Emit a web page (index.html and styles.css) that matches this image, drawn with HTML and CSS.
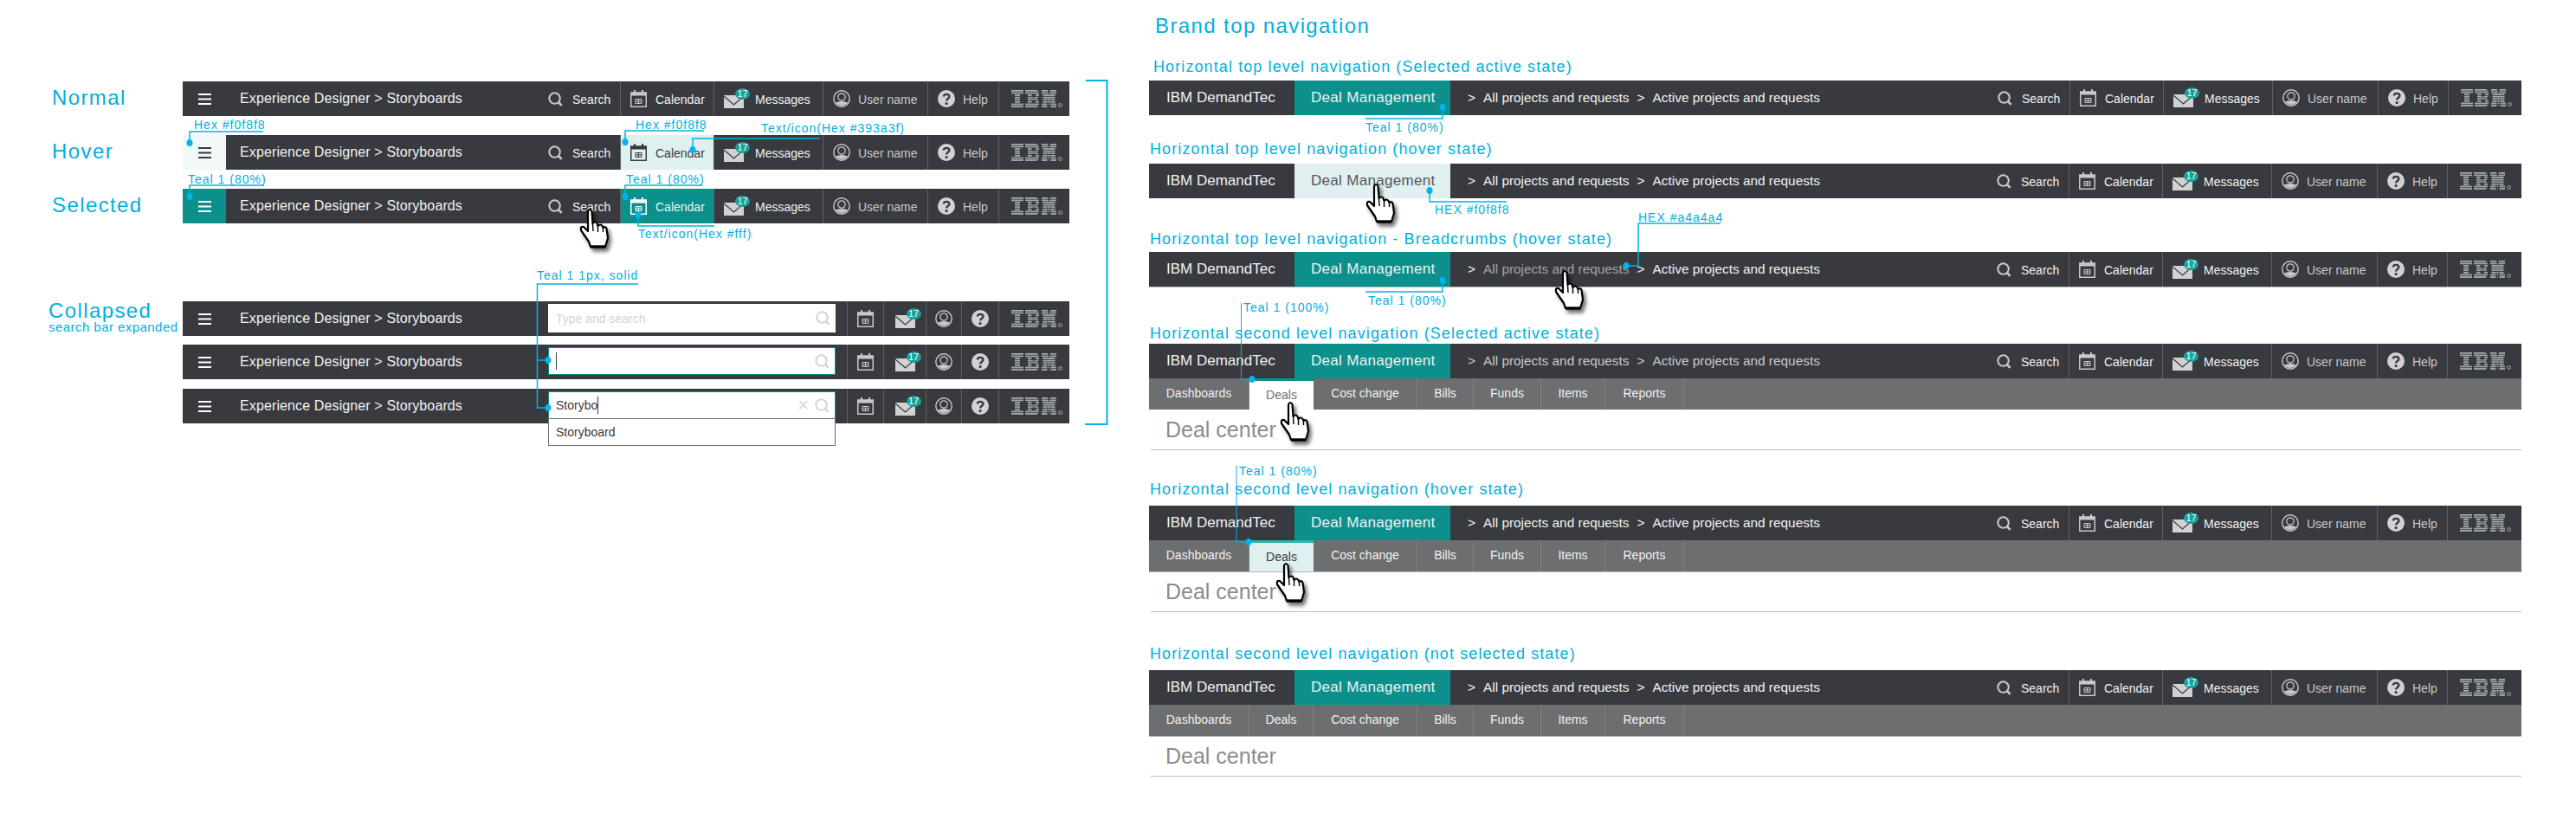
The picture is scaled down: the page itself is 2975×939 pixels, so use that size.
FILE: index.html
```html
<!DOCTYPE html>
<html lang="en">
<head>
  <meta charset="UTF-8">
  <title>Navigation states</title>
  <link rel="stylesheet" href="styles.css">
</head>
<body>

  <!-- Icons used by every bar -->
  <svg class="icon-defs" width="0" height="0" aria-hidden="true">
    <defs>
      <pattern id="ibm-stripes" patternUnits="userSpaceOnUse" width="60" height="2.6">
        <rect width="60" height="1.6" fill="#a9b1b8"/>
      </pattern>
    </defs>
    <symbol id="i-search" viewBox="0 0 18 18">
      <circle cx="8" cy="8" r="6.6" fill="none" stroke="currentColor" stroke-width="2.2"/>
      <path d="M12.5 12.5 L16.5 16.8" fill="none" stroke="currentColor" stroke-width="2.8"/>
    </symbol>
    <symbol id="i-cal" viewBox="0 0 19 20">
      <rect x="0.75" y="3" width="17.5" height="16.25" fill="none" stroke="currentColor" stroke-width="1.5"/>
      <rect x="0.75" y="3" width="17.5" height="3.5" fill="currentColor"/>
      <rect x="4" y="0" width="2" height="4" fill="currentColor"/>
      <rect x="13" y="0" width="2" height="4" fill="currentColor"/>
      <path d="M6 10.5h7v5H6z M9.5 10.5v5 M6 13h7" fill="none" stroke="currentColor" stroke-width="1"/>
    </symbol>
    <symbol id="i-mail" viewBox="0 0 23 15">
      <rect width="23" height="15" fill="currentColor"/>
      <path d="M0 1 L11.5 11 L23 1" fill="none" stroke="#393a3f" stroke-width="1.3"/>
    </symbol>
    <symbol id="i-user" viewBox="0 0 20 20">
      <circle cx="10" cy="10" r="9.2" fill="none" stroke="currentColor" stroke-width="1.4"/>
      <circle cx="10" cy="8" r="4.2" fill="none" stroke="currentColor" stroke-width="1.2"/>
      <path d="M3 14.5 Q6 13 10 13 Q14 13 17 14.5 A8.8 8.8 0 0 1 3 14.5 Z" fill="currentColor"/>
    </symbol>
    <symbol id="i-help" viewBox="0 0 20 20">
      <circle cx="10" cy="10" r="10" fill="currentColor"/>
      <path d="M6.8 7.6 C6.8 3.9 13.4 3.9 13.4 7.6 C13.4 9.9 10.1 9.7 10.1 12.6" fill="none" stroke="#393a3f" stroke-width="2.4"/>
      <circle cx="10.1" cy="15.6" r="1.6" fill="#393a3f"/>
    </symbol>
    <symbol id="i-ibm" viewBox="0 0 60 20">
      <path fill="url(#ibm-stripes)" fill-rule="evenodd" d="M0 0h14v5h-4v10h4v5H0v-5h4V5H0z M16 0h12c3 0 4 2.5 4 5 0 2-1 4-2 5 1 1 2 3 2 5 0 2.5-1 5-4 5H16v-5h3V5h-3z M23.5 5v3.5h4c1 0 1-3.5 0-3.5z M23.5 11.5v3.5h4c1 0 1-3.5 0-3.5z M35 0h7l1.5 6 1.5-6h7v5h-1.5v10H52v5h-6.5V9l-2 11-2-11v11H35v-5h1.5V5H35z"/>
      <circle cx="56.5" cy="17.5" r="1.9" fill="none" stroke="#a9b1b8" stroke-width="1"/>
    </symbol>
    <symbol id="i-hand" viewBox="0 0 36 48">
      <path d="M10 4 Q12 0 14.5 4 L15.5 18 Q18.5 15 20.5 18 L21.5 21 Q24.5 18 26.5 21 L27.5 23 Q30.5 21 31.5 24 L33 35 L30 45 L13 45 L11 39 L2 26 Q1 21 5 22 L10 27 Z" fill="#fff" stroke="#000" stroke-width="2.2" stroke-linejoin="round"/>
      <path d="M15.5 18 L16 27 M21.5 21 L21.5 28 M27.5 23 L27.5 28" fill="none" stroke="#000" stroke-width="1.4"/>
      <path d="M13 45 L30 45" stroke="#000" stroke-width="3.4"/>
    </symbol>
    <symbol id="i-burger" viewBox="0 0 15 13">
      <rect width="15" height="2" fill="currentColor"/>
      <rect y="5.5" width="15" height="2" fill="currentColor"/>
      <rect y="11" width="15" height="2" fill="currentColor"/>
    </symbol>
  </svg>

  <div class="sheet">

    <!-- Left column: application bar states -->
    <section class="states">
      <div class="state-group">
        <div class="state-row">
          <div class="state-label">Normal</div>
          <div class="app-bar">
            <div class="menu-cell"><svg class="icon-burger"><use href="#i-burger"/></svg></div>
            <div class="crumb-title">Experience Designer &gt; Storyboards</div>
            <div class="utility">
              <div class="util util-search"><svg class="icon-search"><use href="#i-search"/></svg><span>Search</span></div>
              <div class="util util-cal"><svg class="icon-cal"><use href="#i-cal"/></svg><span>Calendar</span></div>
              <div class="util util-mail"><span class="mail"><svg class="icon-mail"><use href="#i-mail"/></svg><b class="badge">17</b></span><span>Messages</span></div>
              <div class="util util-user"><svg class="icon-user"><use href="#i-user"/></svg><span>User name</span></div>
              <div class="util util-help"><svg class="icon-help"><use href="#i-help"/></svg><span>Help</span></div>
              <div class="util util-logo"><svg class="icon-ibm"><use href="#i-ibm"/></svg></div>
            </div>
          </div>
        </div>

        <div class="state-row">
          <div class="state-label">Hover</div>
          <div class="app-bar">
            <div class="menu-cell menu-hover"><svg class="icon-burger"><use href="#i-burger"/></svg></div>
            <div class="crumb-title">Experience Designer &gt; Storyboards</div>
            <div class="utility">
              <div class="util util-search"><svg class="icon-search"><use href="#i-search"/></svg><span>Search</span></div>
              <div class="util util-cal util-hover"><svg class="icon-cal"><use href="#i-cal"/></svg><span>Calendar</span></div>
              <div class="util util-mail"><span class="mail"><svg class="icon-mail"><use href="#i-mail"/></svg><b class="badge">17</b></span><span>Messages</span></div>
              <div class="util util-user"><svg class="icon-user"><use href="#i-user"/></svg><span>User name</span></div>
              <div class="util util-help"><svg class="icon-help"><use href="#i-help"/></svg><span>Help</span></div>
              <div class="util util-logo"><svg class="icon-ibm"><use href="#i-ibm"/></svg></div>
            </div>
          </div>
        </div>

        <div class="state-row">
          <div class="state-label">Selected</div>
          <div class="app-bar">
            <div class="menu-cell menu-selected"><svg class="icon-burger"><use href="#i-burger"/></svg></div>
            <div class="crumb-title">Experience Designer &gt; Storyboards</div>
            <div class="utility">
              <div class="util util-search"><svg class="icon-search"><use href="#i-search"/></svg><span>Search</span></div>
              <div class="util util-cal util-selected"><svg class="icon-cal"><use href="#i-cal"/></svg><span>Calendar</span></div>
              <div class="util util-mail"><span class="mail"><svg class="icon-mail"><use href="#i-mail"/></svg><b class="badge">17</b></span><span>Messages</span></div>
              <div class="util util-user"><svg class="icon-user"><use href="#i-user"/></svg><span>User name</span></div>
              <div class="util util-help"><svg class="icon-help"><use href="#i-help"/></svg><span>Help</span></div>
              <div class="util util-logo"><svg class="icon-ibm"><use href="#i-ibm"/></svg></div>
            </div>
          </div>
        </div>
      </div>

      <div class="state-group state-group-collapsed">
        <div class="state-row">
          <div class="state-label state-label-collapsed">Collapsed<small>search bar expanded</small></div>
          <div class="app-bar">
            <div class="menu-cell"><svg class="icon-burger"><use href="#i-burger"/></svg></div>
            <div class="crumb-title">Experience Designer &gt; Storyboards</div>
            <div class="utility">
              <div class="search-box"><span class="placeholder">Type and search</span><svg class="icon-search box-search"><use href="#i-search"/></svg></div>
              <div class="mini mini-cal"><svg class="icon-cal"><use href="#i-cal"/></svg></div>
              <div class="mini mini-mail"><span class="mail"><svg class="icon-mail"><use href="#i-mail"/></svg><b class="badge">17</b></span></div>
              <div class="mini mini-user"><svg class="icon-user"><use href="#i-user"/></svg></div>
              <div class="mini mini-help"><svg class="icon-help"><use href="#i-help"/></svg></div>
              <div class="util util-logo"><svg class="icon-ibm"><use href="#i-ibm"/></svg></div>
            </div>
          </div>
        </div>

        <div class="state-row">
          <div class="state-label"></div>
          <div class="app-bar">
            <div class="menu-cell"><svg class="icon-burger"><use href="#i-burger"/></svg></div>
            <div class="crumb-title">Experience Designer &gt; Storyboards</div>
            <div class="utility">
              <div class="search-box search-focus"><i class="caret"></i><svg class="icon-search box-search"><use href="#i-search"/></svg></div>
              <div class="mini mini-cal"><svg class="icon-cal"><use href="#i-cal"/></svg></div>
              <div class="mini mini-mail"><span class="mail"><svg class="icon-mail"><use href="#i-mail"/></svg><b class="badge">17</b></span></div>
              <div class="mini mini-user"><svg class="icon-user"><use href="#i-user"/></svg></div>
              <div class="mini mini-help"><svg class="icon-help"><use href="#i-help"/></svg></div>
              <div class="util util-logo"><svg class="icon-ibm"><use href="#i-ibm"/></svg></div>
            </div>
          </div>
        </div>

        <div class="state-row state-row-last">
          <div class="state-label"></div>
          <div class="app-bar">
            <div class="menu-cell"><svg class="icon-burger"><use href="#i-burger"/></svg></div>
            <div class="crumb-title">Experience Designer &gt; Storyboards</div>
            <div class="utility">
              <div class="search-box search-focus">
                <span class="typed">Storybo</span><i class="caret"></i>
                <span class="box-clear">&times;</span>
                <svg class="icon-search box-search box-search-typed"><use href="#i-search"/></svg>
                <div class="suggest">Storyboard</div>
              </div>
              <div class="mini mini-cal"><svg class="icon-cal"><use href="#i-cal"/></svg></div>
              <div class="mini mini-mail"><span class="mail"><svg class="icon-mail"><use href="#i-mail"/></svg><b class="badge">17</b></span></div>
              <div class="mini mini-user"><svg class="icon-user"><use href="#i-user"/></svg></div>
              <div class="mini mini-help"><svg class="icon-help"><use href="#i-help"/></svg></div>
              <div class="util util-logo"><svg class="icon-ibm"><use href="#i-ibm"/></svg></div>
            </div>
          </div>
        </div>
      </div>
    </section>

    <!-- Right column: brand navigation -->
    <section class="brand">
      <h1 class="brand-title">Brand top navigation</h1>

      <div class="spec spec-1">
        <h2 class="spec-heading spec-heading-first">Horizontal top level navigation (Selected active state)</h2>
        <div class="brand-bar">
          <div class="product">IBM DemandTec</div>
          <div class="tab tab-selected">Deal Management</div>
          <div class="breadcrumbs"><span class="sep">&gt;</span><span>All projects and requests</span><span class="sep">&gt;</span><span>Active projects and requests</span></div>
          <div class="utility">
            <div class="util util-search"><svg class="icon-search"><use href="#i-search"/></svg><span>Search</span></div>
            <div class="util util-cal"><svg class="icon-cal"><use href="#i-cal"/></svg><span>Calendar</span></div>
            <div class="util util-mail"><span class="mail"><svg class="icon-mail"><use href="#i-mail"/></svg><b class="badge">17</b></span><span>Messages</span></div>
            <div class="util util-user"><svg class="icon-user"><use href="#i-user"/></svg><span>User name</span></div>
            <div class="util util-help"><svg class="icon-help"><use href="#i-help"/></svg><span>Help</span></div>
            <div class="util util-logo"><svg class="icon-ibm"><use href="#i-ibm"/></svg></div>
          </div>
        </div>
      </div>

      <div class="spec spec-2">
        <h2 class="spec-heading">Horizontal top level navigation (hover state)</h2>
        <div class="brand-bar brand-bar-shift">
          <div class="product">IBM DemandTec</div>
          <div class="tab tab-hover">Deal Management</div>
          <div class="breadcrumbs"><span class="sep">&gt;</span><span>All projects and requests</span><span class="sep">&gt;</span><span>Active projects and requests</span></div>
          <div class="utility">
            <div class="util util-search"><svg class="icon-search"><use href="#i-search"/></svg><span>Search</span></div>
            <div class="util util-cal"><svg class="icon-cal"><use href="#i-cal"/></svg><span>Calendar</span></div>
            <div class="util util-mail"><span class="mail"><svg class="icon-mail"><use href="#i-mail"/></svg><b class="badge">17</b></span><span>Messages</span></div>
            <div class="util util-user"><svg class="icon-user"><use href="#i-user"/></svg><span>User name</span></div>
            <div class="util util-help"><svg class="icon-help"><use href="#i-help"/></svg><span>Help</span></div>
            <div class="util util-logo"><svg class="icon-ibm"><use href="#i-ibm"/></svg></div>
          </div>
        </div>
      </div>

      <div class="spec spec-3">
        <h2 class="spec-heading">Horizontal top level navigation - Breadcrumbs (hover state)</h2>
        <div class="brand-bar brand-bar-shift brand-bar-edge">
          <div class="product">IBM DemandTec</div>
          <div class="tab tab-selected">Deal Management</div>
          <div class="breadcrumbs"><span class="sep">&gt;</span><span class="crumb-hover">All projects and requests</span><span class="sep">&gt;</span><span>Active projects and requests</span></div>
          <div class="utility">
            <div class="util util-search"><svg class="icon-search"><use href="#i-search"/></svg><span>Search</span></div>
            <div class="util util-cal"><svg class="icon-cal"><use href="#i-cal"/></svg><span>Calendar</span></div>
            <div class="util util-mail"><span class="mail"><svg class="icon-mail"><use href="#i-mail"/></svg><b class="badge">17</b></span><span>Messages</span></div>
            <div class="util util-user"><svg class="icon-user"><use href="#i-user"/></svg><span>User name</span></div>
            <div class="util util-help"><svg class="icon-help"><use href="#i-help"/></svg><span>Help</span></div>
            <div class="util util-logo"><svg class="icon-ibm"><use href="#i-ibm"/></svg></div>
          </div>
        </div>
      </div>

      <div class="spec spec-4">
        <h2 class="spec-heading">Horizontal second level navigation (Selected active state)</h2>
        <div class="brand-bar brand-bar-shift">
          <div class="product">IBM DemandTec</div>
          <div class="tab tab-selected">Deal Management</div>
          <div class="breadcrumbs breadcrumbs-dim"><span class="sep">&gt;</span><span>All projects and requests</span><span class="sep">&gt;</span><span>Active projects and requests</span></div>
          <div class="utility">
            <div class="util util-search"><svg class="icon-search"><use href="#i-search"/></svg><span>Search</span></div>
            <div class="util util-cal"><svg class="icon-cal"><use href="#i-cal"/></svg><span>Calendar</span></div>
            <div class="util util-mail"><span class="mail"><svg class="icon-mail"><use href="#i-mail"/></svg><b class="badge">17</b></span><span>Messages</span></div>
            <div class="util util-user"><svg class="icon-user"><use href="#i-user"/></svg><span>User name</span></div>
            <div class="util util-help"><svg class="icon-help"><use href="#i-help"/></svg><span>Help</span></div>
            <div class="util util-logo"><svg class="icon-ibm"><use href="#i-ibm"/></svg></div>
          </div>
        </div>
        <div class="sub-nav">
          <div class="sub">Dashboards</div>
          <div class="sub sub-selected">Deals</div>
          <div class="sub">Cost change</div>
          <div class="sub">Bills</div>
          <div class="sub">Funds</div>
          <div class="sub">Items</div>
          <div class="sub">Reports</div>
        </div>
        <div class="page-title">Deal center</div>
      </div>

      <div class="spec spec-5">
        <h2 class="spec-heading">Horizontal second level navigation (hover state)</h2>
        <div class="brand-bar brand-bar-shift">
          <div class="product">IBM DemandTec</div>
          <div class="tab tab-selected">Deal Management</div>
          <div class="breadcrumbs"><span class="sep">&gt;</span><span>All projects and requests</span><span class="sep">&gt;</span><span>Active projects and requests</span></div>
          <div class="utility">
            <div class="util util-search"><svg class="icon-search"><use href="#i-search"/></svg><span>Search</span></div>
            <div class="util util-cal"><svg class="icon-cal"><use href="#i-cal"/></svg><span>Calendar</span></div>
            <div class="util util-mail"><span class="mail"><svg class="icon-mail"><use href="#i-mail"/></svg><b class="badge">17</b></span><span>Messages</span></div>
            <div class="util util-user"><svg class="icon-user"><use href="#i-user"/></svg><span>User name</span></div>
            <div class="util util-help"><svg class="icon-help"><use href="#i-help"/></svg><span>Help</span></div>
            <div class="util util-logo"><svg class="icon-ibm"><use href="#i-ibm"/></svg></div>
          </div>
        </div>
        <div class="sub-nav sub-nav-edge">
          <div class="sub">Dashboards</div>
          <div class="sub sub-hover">Deals</div>
          <div class="sub">Cost change</div>
          <div class="sub">Bills</div>
          <div class="sub">Funds</div>
          <div class="sub">Items</div>
          <div class="sub">Reports</div>
        </div>
        <div class="page-title">Deal center</div>
      </div>

      <div class="spec spec-6">
        <h2 class="spec-heading">Horizontal second level navigation (not selected state)</h2>
        <div class="brand-bar brand-bar-shift">
          <div class="product">IBM DemandTec</div>
          <div class="tab tab-selected">Deal Management</div>
          <div class="breadcrumbs"><span class="sep">&gt;</span><span>All projects and requests</span><span class="sep">&gt;</span><span>Active projects and requests</span></div>
          <div class="utility">
            <div class="util util-search"><svg class="icon-search"><use href="#i-search"/></svg><span>Search</span></div>
            <div class="util util-cal"><svg class="icon-cal"><use href="#i-cal"/></svg><span>Calendar</span></div>
            <div class="util util-mail"><span class="mail"><svg class="icon-mail"><use href="#i-mail"/></svg><b class="badge">17</b></span><span>Messages</span></div>
            <div class="util util-user"><svg class="icon-user"><use href="#i-user"/></svg><span>User name</span></div>
            <div class="util util-help"><svg class="icon-help"><use href="#i-help"/></svg><span>Help</span></div>
            <div class="util util-logo"><svg class="icon-ibm"><use href="#i-ibm"/></svg></div>
          </div>
        </div>
        <div class="sub-nav sub-nav-edge">
          <div class="sub">Dashboards</div>
          <div class="sub">Deals</div>
          <div class="sub">Cost change</div>
          <div class="sub">Bills</div>
          <div class="sub">Funds</div>
          <div class="sub">Items</div>
          <div class="sub">Reports</div>
        </div>
        <div class="page-title">Deal center</div>
      </div>
    </section>

    <!-- Redlines drawn over the bars -->
    <svg class="leaders" width="2975" height="939" fill="none" stroke="#00b4e4" stroke-width="1.5">
      <path d="M304 152 H219 V165"/>
      <path d="M305 214 H219 V227"/>
      <path d="M813 151 H722 V164"/>
      <path d="M947 160 H800 V173"/>
      <path d="M811 214 H722 V227"/>
      <path d="M825 261 H737 V248"/>
      <path d="M737 328 H620.5 V471 H633 M620.5 416 H633"/>
      <path d="M1254 93 H1278.5 V490 H1253" stroke-width="2"/>
      <path d="M1577 137 H1666 V124"/>
      <path d="M1651 220 V233 H1740"/>
      <path d="M1987 258 H1892 V307 H1878"/>
      <path d="M1577 337 H1666 V324"/>
      <path d="M1433.5 350 V438 H1446" stroke-width="1"/>
      <path d="M1428 538 V626 H1442" stroke-width="1"/>
      <g fill="#00b4f0" stroke="none">
        <ellipse cx="219" cy="165" rx="3.5" ry="4"/>
        <ellipse cx="219" cy="227" rx="3.5" ry="4"/>
        <ellipse cx="722" cy="164" rx="3.5" ry="4"/>
        <ellipse cx="800" cy="173" rx="3.5" ry="4"/>
        <ellipse cx="722" cy="227" rx="3.5" ry="4"/>
        <ellipse cx="737" cy="248" rx="3.5" ry="4"/>
        <ellipse cx="633" cy="416" rx="3.5" ry="4"/>
        <ellipse cx="633" cy="471" rx="3.5" ry="4"/>
        <ellipse cx="1666" cy="124" rx="3.5" ry="4"/>
        <ellipse cx="1651" cy="220" rx="3.5" ry="4"/>
        <ellipse cx="1878" cy="307" rx="3.5" ry="4"/>
        <ellipse cx="1666" cy="324" rx="3.5" ry="4"/>
        <ellipse cx="1446" cy="438" rx="3.5" ry="4"/>
        <ellipse cx="1442" cy="626" rx="3.5" ry="4"/>
      </g>
    </svg>

    <span class="note note-hex-menu">Hex #f0f8f8</span>
    <span class="note note-teal-menu">Teal 1 (80%)</span>
    <span class="note note-hex-cal">Hex #f0f8f8</span>
    <span class="note note-text-dark">Text/icon(Hex #393a3f)</span>
    <span class="note note-teal-cal">Teal 1 (80%)</span>
    <span class="note note-text-white">Text/icon(Hex #fff)</span>
    <span class="note note-teal-solid">Teal 1 1px, solid</span>
    <span class="note note-teal-tab1">Teal 1 (80%)</span>
    <span class="note note-hex-tab">HEX #f0f8f8</span>
    <span class="note note-hex-crumb">HEX #a4a4a4</span>
    <span class="note note-teal-tab3">Teal 1 (80%)</span>
    <span class="note note-teal-sub">Teal 1 (100%)</span>
    <span class="note note-teal-subhover">Teal 1 (80%)</span>

    <svg class="hand hand-search"><use href="#i-hand"/></svg>
    <svg class="hand hand-tab"><use href="#i-hand"/></svg>
    <svg class="hand hand-crumb"><use href="#i-hand"/></svg>
    <svg class="hand hand-sub"><use href="#i-hand"/></svg>
    <svg class="hand hand-subhover"><use href="#i-hand"/></svg>
  </div>

</body>
</html>
```

FILE: styles.css
```css
body {
  margin: 0;
  background-color: #ffffff;
  font-family: "Liberation Sans", Arial, sans-serif;
  color: #f2f2f2;
}

.icon-defs {
  position: absolute;
}

.sheet {
  position: relative;
  display: flex;
  width: 2975px;
  height: 939px;
  overflow: hidden;
}

/* Left column */

.states {
  width: 1327px;
  padding-top: 94px;
  box-sizing: border-box;
}

.state-group {
  display: flex;
  flex-direction: column;
  gap: 22px;
}

.state-group-collapsed {
  margin-top: 90px;
  gap: 10px;
}

.state-row {
  display: flex;
}

.state-row-last {
  margin-top: 1px;
}

.state-label {
  width: 211px;
  padding: 0 0 2px 60px;
  box-sizing: border-box;
  align-self: center;
  font-size: 24px;
  letter-spacing: 1.4px;
  white-space: nowrap;
  color: #00b0dc;
}

.state-label-collapsed {
  padding-left: 56px;
  line-height: 22px;
  letter-spacing: 1.4px;
}

.state-label small {
  display: block;
  line-height: 16px;
  font-size: 15px;
  letter-spacing: 0.45px;
}

.app-bar,
.brand-bar {
  display: flex;
  height: 40px;
  background-color: #393a3f;
}

.app-bar {
  width: 1024px;
}

.menu-cell {
  display: flex;
  align-items: center;
  justify-content: center;
  width: 50px;
  color: #ffffff;
}

.menu-hover {
  background-color: #f0f8f8;
  color: #393a3f;
}

.menu-selected {
  background-color: #0c908b;
}

.icon-burger {
  width: 15px;
  height: 13px;
}

.crumb-title {
  padding-left: 16px;
  line-height: 39px;
  font-size: 16px;
  letter-spacing: 0.12px;
  white-space: nowrap;
}

.utility {
  display: flex;
  margin-left: auto;
  font-size: 14px;
}

.util {
  display: flex;
  align-items: center;
  box-sizing: border-box;
  padding-left: 11px;
  border-left: 1px solid #5f6064;
  white-space: nowrap;
  color: #c9c9cb;
}

.util span {
  color: #f2f2f2;
  padding-top: 2px;
}

.util-search {
  width: 83px;
  padding-left: 0;
  gap: 11px;
  border-left: none;
}

.util-cal {
  width: 108px;
  gap: 10px;
}

.util-mail {
  width: 126px;
  gap: 13px;
}

.util-user {
  width: 121px;
  gap: 9px;
}

.util-help {
  width: 82px;
  gap: 9px;
}

.util-logo {
  width: 82px;
  padding-left: 14px;
}

.util-user span,
.util-help span {
  color: #c9c9cb;
}

.util-hover {
  background-color: #e0efef;
  color: #393a3f;
}

.util-hover span {
  color: #393a3f;
}

.util-selected {
  background-color: #0c908b;
  color: #ffffff;
}

.icon-search {
  width: 17px;
  height: 17px;
}

.icon-cal {
  width: 19px;
  height: 20px;
}

.mail {
  position: relative;
  display: block;
  width: 23px;
  height: 15px;
  margin-top: 6px;
  color: #d2d2d4;
}

.util .mail {
  padding: 0;
  color: #d2d2d4;
}

.icon-mail {
  display: block;
  width: 23px;
  height: 15px;
}

.badge {
  position: absolute;
  top: -8px;
  right: -7px;
  width: 17px;
  height: 13px;
  border-radius: 50%;
  background-color: #17a398;
  color: #ffffff;
  font-size: 11px;
  font-weight: normal;
  line-height: 13px;
  text-align: center;
}

.icon-user,
.icon-help {
  width: 20px;
  height: 20px;
}

.icon-help {
  color: #d2d2d4;
}

.icon-ibm {
  width: 60px;
  height: 20px;
}

/* Collapsed bars: the search box takes the labels' room */

.search-box {
  position: relative;
  display: flex;
  align-items: center;
  box-sizing: border-box;
  width: 332px;
  height: 33px;
  margin: 3px 13px 0 0;
  padding-left: 9px;
  background-color: #ffffff;
  color: #393a3f;
}

.search-focus {
  height: 32px;
  padding-left: 8px;
  border: 1px solid #0c908b;
}

.placeholder {
  color: #d2d2d4;
}

.caret {
  display: block;
  width: 1px;
  height: 20px;
  background-color: #393a3f;
}

.box-search {
  margin-left: auto;
  margin-right: 6px;
  color: #d5d5d7;
}

.box-search-typed {
  margin-left: 0;
}

.box-clear {
  margin-left: auto;
  margin-right: 7px;
  font-size: 22px;
  line-height: 22px;
  color: #d5d5d7;
}

.suggest {
  position: absolute;
  left: -1px;
  top: 30px;
  width: 332px;
  height: 32px;
  box-sizing: border-box;
  padding-left: 8px;
  border: 1px solid #6d6e70;
  background-color: #ffffff;
  line-height: 30px;
}

.mini {
  display: flex;
  align-items: center;
  justify-content: center;
  box-sizing: border-box;
  border-left: 1px solid #5f6064;
  color: #c9c9cb;
}

.mini-cal {
  width: 42px;
}

.mini-mail {
  width: 49px;
}

.mini-user {
  width: 41px;
}

.mini-help {
  width: 43px;
}

/* Right column */

.brand {
  width: 1585px;
  padding-top: 18px;
}

.brand-title {
  margin: 0 0 0 7px;
  font-size: 24px;
  font-weight: normal;
  line-height: 24px;
  letter-spacing: 1.4px;
  color: #00b0dc;
}

.spec-heading {
  margin: 0;
  padding-left: 1px;
  font-size: 18px;
  font-weight: normal;
  line-height: 22px;
  letter-spacing: 1.1px;
  color: #00b0dc;
}

.spec-heading-first {
  padding-left: 5px;
}

.spec-1 { margin-top: 24px; }
.spec-1 .spec-heading { margin-bottom: 5px; }
.spec-2 { margin-top: 28px; }
.spec-2 .spec-heading { margin-bottom: 6px; }
.spec-3 { margin-top: 36px; }
.spec-3 .spec-heading { margin-bottom: 4px; }
.spec-4 { margin-top: 43px; }
.spec-4 .spec-heading { margin-bottom: 1px; }
.spec-5 { margin-top: 34px; }
.spec-5 .spec-heading { margin-bottom: 8px; }
.spec-6 { margin-top: 37px; }
.spec-6 .spec-heading { margin-bottom: 8px; }

.product {
  width: 168px;
  padding-left: 20px;
  box-sizing: border-box;
  line-height: 39px;
  font-size: 17px;
  letter-spacing: 0;
  white-space: nowrap;
}

.tab {
  width: 180px;
  padding-left: 19px;
  box-sizing: border-box;
  line-height: 39px;
  font-size: 17px;
  letter-spacing: 0.3px;
  white-space: nowrap;
}

.tab-selected {
  background-color: #0c908b;
}

.tab-hover {
  background-color: #e0efef;
  color: #55565a;
}

.brand-bar-edge {
  box-shadow: 0 1px 0 #b5b5b7;
}

.breadcrumbs {
  display: flex;
  gap: 9px;
  padding-left: 20px;
  line-height: 40px;
  font-size: 15.4px;
  white-space: nowrap;
}

.breadcrumbs-dim {
  color: #c9c9cb;
}

.crumb-hover {
  color: #a4a4a4;
}

.brand-bar .util-user {
  width: 122px;
}

.brand-bar .util-help {
  width: 81px;
}

.brand-bar .util-logo {
  width: 85px;
}

.brand-bar-shift .util-logo {
  width: 86px;
}

.sub-nav {
  display: grid;
  grid-template-columns: 116px 74px 120px 65px 78px 74px 91px;
  justify-content: start;
  height: 36px;
  background-color: #6d6e70;
}

.sub-nav-edge {
  box-shadow: 0 1px 0 #b5b5b7;
}

.sub {
  box-sizing: border-box;
  border-right: 1px solid #7f8082;
  line-height: 35px;
  font-size: 14px;
  text-align: center;
}

.sub-selected {
  border-top: 3px solid #0c908b;
  border-right: none;
  background-color: #ffffff;
  line-height: 32px;
  color: #6d6e70;
}

.sub-hover {
  border-top: 3px solid #2db5ad;
  border-right: none;
  background-color: #e0efef;
  line-height: 32px;
  color: #393a3f;
}

.page-title {
  display: flex;
  align-items: center;
  height: 46px;
  margin-left: 2px;
  padding-left: 17px;
  border-bottom: 1px solid #bbbbbd;
  font-size: 25px;
  color: #8c8c8e;
}

/* Redlines */

.leaders {
  position: absolute;
  left: 0;
  top: 0;
}

.note {
  position: absolute;
  font-size: 14px;
  line-height: 16px;
  letter-spacing: 1px;
  white-space: nowrap;
  color: #00b0dc;
}

.note-hex-menu { left: 224px; top: 136px; }
.note-teal-menu { left: 217px; top: 199px; }
.note-hex-cal { left: 734px; top: 136px; }
.note-text-dark { left: 879px; top: 140px; }
.note-teal-cal { left: 723px; top: 199px; }
.note-text-white { left: 737px; top: 262px; }
.note-teal-solid { left: 620px; top: 310px; }
.note-teal-tab1 { left: 1577px; top: 139px; }
.note-hex-tab { left: 1657px; top: 234px; }
.note-hex-crumb { left: 1892px; top: 243px; }
.note-teal-tab3 { left: 1580px; top: 339px; }
.note-teal-sub { left: 1436px; top: 347px; }
.note-teal-subhover { left: 1431px; top: 536px; }

.hand {
  position: absolute;
  width: 36px;
  height: 48px;
  filter: drop-shadow(3px 4px 2px rgba(0, 0, 0, 0.55));
}

.hand-search { left: 669px; top: 240px; }
.hand-tab { left: 1577px; top: 211px; }
.hand-crumb { left: 1795px; top: 311px; }
.hand-sub { left: 1478px; top: 463px; }
.hand-subhover { left: 1473px; top: 649px; }
```
